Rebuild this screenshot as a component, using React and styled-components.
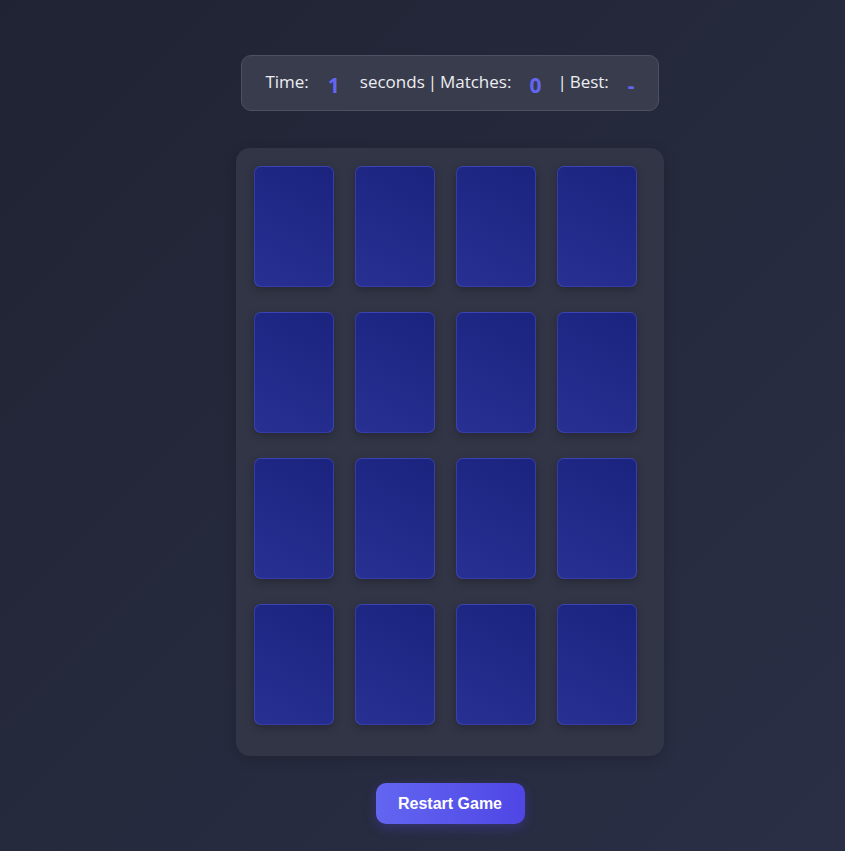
import styled, { createGlobalStyle } from "styled-components";

/*
 ** GLOBAL
 */
const GlobalStyle = createGlobalStyle`
  html, body {
    margin: 0;
    padding: 0;
  }
  body {
    min-height: 851px;
    background: linear-gradient(135deg, #1f2333 0%, #262a3d 55%, #2b2f46 100%);
    font-family: "Open Sans", "Noto Sans", sans-serif;
  }
`;

/*
 ** STYLED COMPONENTS
 */
//Page
const Page = styled.div`
  display: flex;
  flex-direction: column;
  align-items: center;
  padding: 55px 0 0 55px;
  box-sizing: border-box;
  min-height: 851px;
`;

//Stats bar
const Stats = styled.div`
  box-sizing: border-box;
  width: 418px;
  height: 56px;
  display: flex;
  align-items: center;
  justify-content: center;
  padding-bottom: 3px;
  background: #393c4d;
  border: 1px solid #4d5061;
  border-radius: 10px;
  color: #eceef2;
  font-size: 17px;
  word-spacing: -1.5px;
  white-space: pre;
`;

const Num = styled.span`
  display: inline-block;
  margin: ${({ $m }) => $m};
  color: #6366f1;
  font-weight: 700;
  font-size: 21px;
  position: relative;
  top: 3px;
`;

//Board
const Board = styled.div`
  box-sizing: border-box;
  width: 428px;
  margin-top: 37px;
  padding: 18px 27px 31px 18px;
  background: #323546;
  border-radius: 14px;
  box-shadow: 0 4px 14px rgba(0, 0, 0, 0.18);
  display: grid;
  grid-template-columns: repeat(4, 80px);
  column-gap: 21px;
  row-gap: 25px;
`;

//Card
const Card = styled.div`
  box-sizing: border-box;
  width: 80px;
  height: 121px;
  border-radius: 7px;
  background: linear-gradient(30deg, #283193 0%, #212a88 50%, #1a237e 100%);
  border: 1px solid rgba(99, 102, 241, 0.35);
  box-shadow: 0 3px 8px rgba(0, 0, 0, 0.25);
`;

//Restart button
const Button = styled.button`
  margin-top: 27px;
  width: 149px;
  height: 41px;
  border: none;
  border-radius: 10px;
  background: linear-gradient(90deg, #6366f1 0%, #4f46e5 100%);
  color: #ffffff;
  font-family: "Liberation Sans", Arial, sans-serif;
  font-weight: 700;
  font-size: 16px;
  box-shadow: 0 4px 12px rgba(79, 70, 229, 0.3);
  cursor: pointer;
`;

/*
 ** COMPONENT [App]
 */
const cards = Array.from({ length: 16 }, (_, i) => i);

const App = () => {
  return (
    <>
      <GlobalStyle />
      <Page>
        <Stats>
          Time:<Num $m="0 20px 0 19px">1</Num>seconds | Matches:
          <Num $m="0 16px 0 18px">0</Num>| Best:<Num $m="0 0 0 19px">-</Num>
        </Stats>
        <Board>
          {cards.map((c) => (
            <Card key={c} />
          ))}
        </Board>
        <Button>Restart Game</Button>
      </Page>
    </>
  );
};

export default App;
